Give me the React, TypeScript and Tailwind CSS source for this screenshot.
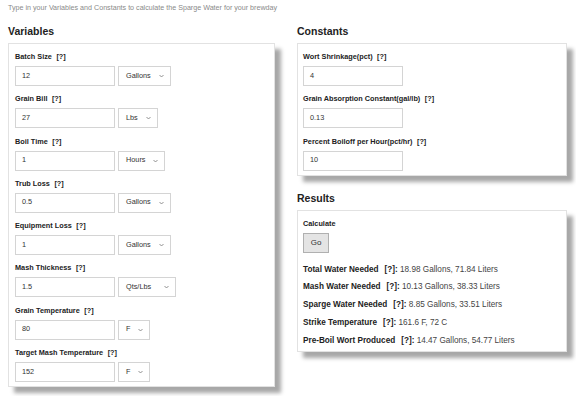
import React from "react";

const Chevron = () => (
  <svg width="5" height="4" viewBox="0 0 5 4" className="shrink-0">
    <path d="M0.5 1 L2.5 3 L4.5 1" fill="none" stroke="#777" strokeWidth="0.8" />
  </svg>
);

const Label = ({ text }: { text: string }) => (
  <div className="h-[10px] leading-[10px] text-[7.3px] font-bold text-[#222] whitespace-nowrap">
    {text}
    <span className="ml-[4.5px]">[?]</span>
  </div>
);

const Input = ({ value }: { value: string }) => (
  <div className="w-[100px] h-[20px] border border-[#d4d4d4] bg-white flex items-center pl-[6px] text-[7.3px] text-[#333]">
    {value}
  </div>
);

const Select = ({ value, w }: { value: string; w: string }) => (
  <div
    className={`${w} h-[20px] border border-[#d4d4d4] bg-white flex items-center justify-between pl-[7px] pr-[6px] text-[7.3px] text-[#333]`}
  >
    <span>{value}</span>
    <Chevron />
  </div>
);

const vars: { label: string; value: string; unit: string; w: string }[] = [
  { label: "Batch Size", value: "12", unit: "Gallons", w: "w-[53px]" },
  { label: "Grain Bill", value: "27", unit: "Lbs", w: "w-[40px]" },
  { label: "Boil Time", value: "1", unit: "Hours", w: "w-[47px]" },
  { label: "Trub Loss", value: "0.5", unit: "Gallons", w: "w-[53px]" },
  { label: "Equipment Loss", value: "1", unit: "Gallons", w: "w-[53px]" },
  { label: "Mash Thickness", value: "1.5", unit: "Qts/Lbs", w: "w-[58px]" },
  { label: "Grain Temperature", value: "80", unit: "F", w: "w-[32px]" },
  { label: "Target Mash Temperature", value: "152", unit: "F", w: "w-[32px]" },
];

const consts = [
  { label: "Wort Shrinkage(pct)", value: "4" },
  { label: "Grain Absorption Constant(gal/lb)", value: "0.13" },
  { label: "Percent Boiloff per Hour(pct/hr)", value: "10" },
];

const results = [
  { label: "Total Water Needed", value: "18.98 Gallons, 71.84 Liters" },
  { label: "Mash Water Needed", value: "10.13 Gallons, 38.33 Liters" },
  { label: "Sparge Water Needed", value: "8.85 Gallons, 33.51 Liters" },
  { label: "Strike Temperature", value: "161.6 F, 72 C" },
  { label: "Pre-Boil Wort Produced", value: "14.47 Gallons, 54.77 Liters" },
];

export default function App() {
  return (
    <div className="w-[576px] h-[396px] bg-white overflow-hidden font-['Liberation_Sans',Arial,sans-serif]">
      <p className="pl-[8px] pt-[3px] h-[24px] leading-[10px] text-[7.15px] text-[#8a8a8a]">
        Type in your Variables and Constants to calculate the Sparge Water for your brewday
      </p>
      <div className="flex pl-[8px] gap-[22px]">
        <div className="w-[267px]">
          <h2 className="h-[19px] leading-[15px] text-[10.5px] font-bold text-[#222]">Variables</h2>
          <div className="border border-[#e2e2e2] bg-white shadow-[6px_6px_4px_#a8a8a8] pl-[6px] pt-[8px] pb-[4px] flex flex-col gap-[8.3px]">
            {vars.map((v) => (
              <div key={v.label}>
                <Label text={v.label} />
                <div className="mt-[4px] flex gap-[3px]">
                  <Input value={v.value} />
                  <Select value={v.unit} w={v.w} />
                </div>
              </div>
            ))}
          </div>
        </div>
        <div className="w-[270px]">
          <h2 className="h-[19px] leading-[15px] text-[10.5px] font-bold text-[#222]">Constants</h2>
          <div className="border border-[#e2e2e2] bg-white shadow-[6px_6px_4px_#a8a8a8] pl-[5px] pt-[8px] pb-[4px] flex flex-col gap-[8.3px]">
            {consts.map((c) => (
              <div key={c.label}>
                <Label text={c.label} />
                <div className="mt-[4px] flex">
                  <Input value={c.value} />
                </div>
              </div>
            ))}
          </div>
          <h2 className="mt-[17px] h-[17px] leading-[10px] text-[10.5px] font-bold text-[#222]">Results</h2>
          <div className="border border-[#e2e2e2] bg-white shadow-[6px_6px_4px_#a8a8a8] pl-[5px] pt-[8px] pb-[2px]">
            <div className="h-[10px] leading-[10px] text-[7.3px] font-bold text-[#222]">Calculate</div>
            <div className="mt-[4px] w-[26px] h-[20px] border border-[#b0b0b0] bg-[#e4e4e4] flex items-center justify-center text-[8px] text-[#333]">
              Go
            </div>
            <div className="mt-[8px] flex flex-col">
              {results.map((r) => (
                <div key={r.label} className="leading-[17.75px] text-[8.2px] text-[#444] whitespace-nowrap">
                  <span className="font-bold text-[#222]">
                    {r.label}
                    <span className="ml-[6px]">[?]:</span>
                  </span>{" "}
                  {r.value}
                </div>
              ))}
            </div>
          </div>
        </div>
      </div>
    </div>
  );
}
